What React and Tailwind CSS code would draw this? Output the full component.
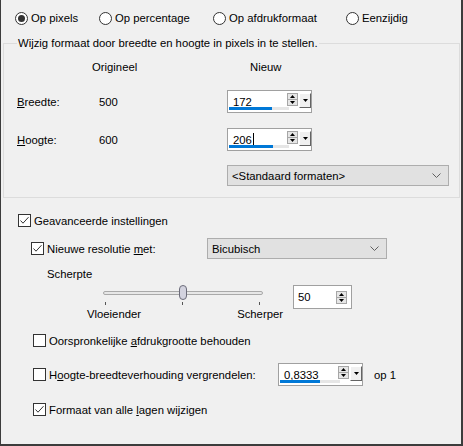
import React from "react";

const Radio = ({ checked, label, width }) => (
  <div className={`flex items-center gap-[3px] ${width}`}>
    <span className="flex h-[13px] w-[13px] shrink-0 items-center justify-center rounded-full border border-[#333333] bg-white">
      {checked && <span className="h-[7px] w-[7px] rounded-full bg-[#333333]" />}
    </span>
    <span>{label}</span>
  </div>
);

const Checkbox = ({ checked }) => (
  <span className="flex h-[13px] w-[13px] shrink-0 items-center justify-center border border-[#333333] bg-white">
    {checked && (
      <svg width="11" height="11" viewBox="0 0 11 11">
        <path d="M1.5 5.5 L4 8.2 L9.5 2.2" fill="none" stroke="#333333" strokeWidth="1" />
      </svg>
    )}
  </span>
);

const SpinButtons = () => (
  <div className="flex flex-col">
    <div className="flex h-[7px] w-[11px] items-center justify-center border border-[#a6a6a6] bg-[#e6e6e6]">
      <svg width="5" height="3" viewBox="0 0 5 3">
        <path d="M0 3 L2.5 0 L5 3Z" fill="#000" />
      </svg>
    </div>
    <div className="-mt-px flex h-[7px] w-[11px] items-center justify-center border border-[#a6a6a6] bg-[#e6e6e6]">
      <svg width="5" height="3" viewBox="0 0 5 3">
        <path d="M0 0 L5 0 L2.5 3Z" fill="#000" />
      </svg>
    </div>
  </div>
);

const DropButton = () => (
  <div className="flex h-[15px] w-[12px] items-center justify-center border border-t-white border-l-white border-r-[#646464] border-b-[#646464] bg-[#f0f0f0]">
    <svg width="5" height="3" viewBox="0 0 5 3">
      <path d="M0 0 L5 0 L2.5 3Z" fill="#000" />
    </svg>
  </div>
);

const NumBox = ({ value, bar, caret }) => (
  <div className="relative flex h-[23px] w-[85px] shrink-0 items-center border border-[#a0a0a0] bg-white">
    <div className="flex w-[60px] items-center pl-[5px]">
      <span>{value}</span>
      {caret && <span className="ml-px h-[14px] w-px bg-black" />}
    </div>
    <div className="mb-[2px] flex items-start gap-px">
      <SpinButtons />
      <DropButton />
    </div>
    <div className="absolute bottom-[2px] left-px flex h-[3px] w-[60px] bg-[#e6e6e6]">
      <div className={`h-[3px] bg-[#0078d7] ${bar}`} />
    </div>
  </div>
);

const Combo = ({ label, width }) => (
  <div className={`flex h-[21px] items-center justify-between border border-[#adadad] bg-[#e1e1e1] pl-[4px] pr-[7px] ${width}`}>
    <span>{label}</span>
    <svg width="9" height="5" viewBox="0 0 9 5">
      <path d="M0.5 0.5 L4.5 4.5 L8.5 0.5" fill="none" stroke="#606060" strokeWidth="1" />
    </svg>
  </div>
);

const App = () => {
  return (
    <div className="flex h-[446px] w-[463px] flex-col border-l border-r-2 border-b-2 border-[#3c3c3c] bg-[#f0f0f0] font-['Liberation_Sans',Arial,sans-serif] text-[11.3px] leading-[16px] text-black">
      <div className="ml-[14px] mt-[11px] flex h-[14px] items-center">
        <Radio checked label="Op pixels" width="w-[84px]" />
        <Radio label="Op percentage" width="w-[114px]" />
        <Radio label="Op afdrukformaat" width="w-[133px]" />
        <Radio label="Eenzijdig" width="w-[100px]" />
      </div>

      <fieldset className="ml-[2px] mt-[10px] h-[163px] w-[457px] border border-[#dcdcdc]">
        <legend className="ml-[13px] px-px leading-[16px]">
          Wijzig formaat door breedte en hoogte in pixels in te stellen.
        </legend>

        <div className="mt-[8px] flex h-[16px] items-center">
          <span className="ml-[88px] w-[158px]">Origineel</span>
          <span>Nieuw</span>
        </div>

        <div className="mt-[15px] flex h-[23px] items-center pl-[13px]">
          <span className="w-[82px]">
            <u>B</u>reedte:
          </span>
          <span className="w-[128px]">500</span>
          <NumBox value="172" bar="w-[43px]" />
        </div>

        <div className="mt-[15px] flex h-[23px] items-center pl-[13px]">
          <span className="w-[82px]">
            <u>H</u>oogte:
          </span>
          <span className="w-[128px]">600</span>
          <NumBox value="206" bar="w-[44px]" caret />
        </div>

        <div className="ml-[223px] mt-[14px]">
          <Combo label="<Standaard formaten>" width="w-[222px]" />
        </div>
      </fieldset>

      <div className="ml-[17px] mt-[16px] flex h-[13px] items-center gap-[3px]">
        <Checkbox checked />
        <span>Geavanceerde instellingen</span>
      </div>

      <div className="ml-[30px] mt-[11px] flex h-[21px] items-center">
        <div className="flex w-[176px] items-center gap-[3px]">
          <Checkbox checked />
          <span>
            Nieuwe resolutie <u>m</u>et:
          </span>
        </div>
        <Combo label="Bicubisch" width="w-[180px]" />
      </div>

      <div className="ml-[46px] mt-[7px] flex h-[16px] items-center">Scherpte</div>

      <div className="ml-[86px] mt-[3px] flex items-start">
        <div className="w-[196px]">
          <div className="relative ml-[16px] h-[15px] w-[160px] pt-[6px]">
            <div className="h-[4px] rounded-full border border-[#a9a9a9] bg-[#e7e7e7]" />
            <div className="absolute left-[76px] top-0 h-[15px] w-[8px] rounded-[4px] border border-[#6c6c7a] bg-[#d3d3df]" />
          </div>
          <div className="mt-[2px] flex h-[3px]">
            <span className="ml-[18px] h-[3px] w-px bg-[#555555]" />
            <span className="ml-[76px] h-[3px] w-px bg-[#555555]" />
            <span className="ml-[76px] h-[3px] w-px bg-[#555555]" />
          </div>
          <div className="mt-px flex justify-between">
            <span>Vloeiender</span>
            <span>Scherper</span>
          </div>
        </div>
        <div className="ml-[10px] flex h-[24px] w-[59px] items-center justify-between border border-[#a0a0a0] bg-white pl-[4px] pr-[4px]">
          <span>50</span>
          <SpinButtons />
        </div>
      </div>

      <div className="ml-[32px] mt-[12px] flex h-[13px] items-center gap-[3px]">
        <Checkbox />
        <span>
          Oorspronkelijke <u>a</u>fdrukgrootte behouden
        </span>
      </div>

      <div className="ml-[32px] mt-[16px] flex h-[23px] items-center">
        <div className="flex w-[245px] items-center gap-[3px]">
          <Checkbox />
          <span>
            H<u>o</u>ogte-breedteverhouding vergrendelen:
          </span>
        </div>
        <NumBox value="0,8333" bar="w-[40px]" />
        <span className="ml-[11px]">op 1</span>
      </div>

      <div className="ml-[32px] mt-[17px] flex h-[13px] items-center gap-[3px]">
        <Checkbox checked />
        <span>
          Formaat van alle <u>l</u>agen wijzigen
        </span>
      </div>
    </div>
  );
};

export default App;
